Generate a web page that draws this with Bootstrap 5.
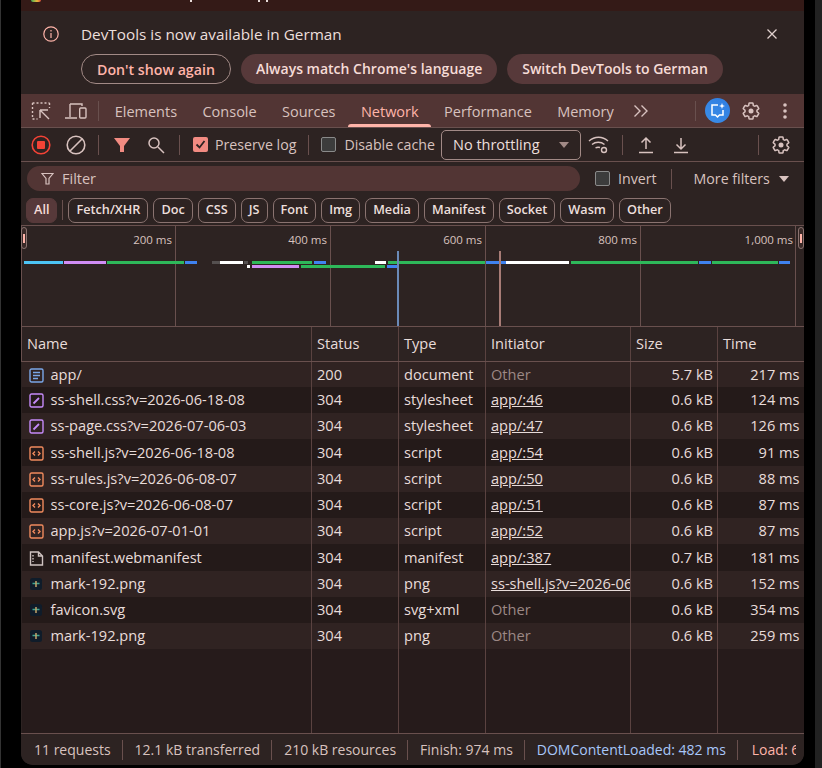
<!DOCTYPE html>
<html lang="en">
<head>
<meta charset="UTF-8">
<title>DevTools Network</title>
<link href="https://cdn.jsdelivr.net/npm/bootstrap@5.3.0/dist/css/bootstrap.min.css" rel="stylesheet">
<style>
    html, body { height: 768px; overflow: hidden; }
    body { background: #000; font-family: "Open Sans", "Noto Sans", sans-serif; font-size: 14.5px; color: #e8dcda; line-height: 1.2; }
    .side-strip { width: 1px; background: #333; margin-right: 20px; }
    .right-strip { width: 7px; height: 768px; background: #222; margin-left: 11px; }
    .devtools { width: 783px; height: 765px; background: #2d2322; border-radius: 0 0 12px 12px; overflow: hidden; }
    .title-strip { height: 11px; background: #341a17; }
    .fav-bit { width: 10px; height: 2px; margin-left: 10px; border-radius: 0 0 5px 5px; background: linear-gradient(90deg, #3aa655, #e8b93a 60%, #d9483b); }
    .text-bit { width: 2px; height: 2px; background: #e8dcda; }
    .bit-a { margin-left: 149px; }
    .bit-b { margin-left: 66px; }
    .bit-c { margin-left: 6px; }
    .info-bar { height: 83px; padding: 14px 27px 0 22px; }
    .info-head { margin-bottom: 11px; }
    .info-title { color: #ecdfdc; font-size: 15.3px; margin-left: 22px; }
    .pill-row { margin-left: 38px; gap: 10px; }
    .pill { height: 30px; border-radius: 15px; padding: 0 15px; font-weight: 600; font-size: 14px; background: #57393a; color: #f6dcd7; border: 0; }
    .pill-line { background: transparent; border: 1px solid #a28a86; color: #ffb4a9; font-size: 14.2px; }
    .tab-bar { height: 34px; background: #523534; border-bottom: 1px solid #69504e; }
    .tab-item { padding: 2px 12.7px 0; height: 33px; font-size: 14.5px; font-weight: 500; color: #d8c2bf; position: relative; }
    .tab-on { color: #ffb4a9; }
    .tab-on::after { content: ""; position: absolute; left: 0; right: 0; bottom: 0; height: 3px; background: #ffb4a9; border-radius: 3px 3px 0 0; }
    .tool-bar { height: 34px; border-bottom: 1px solid #69504e; }
    .vsep { width: 1px; height: 20px; background: #69504e; flex: none; }
    .ic { flex: none; display: block; }
    .check { width: 15px; height: 15px; border-radius: 2px; background: #f28b82; flex: none; }
    .uncheck { width: 15px; height: 15px; border-radius: 2px; background: #3c3c3c; border: 1px solid #8a8a8a; flex: none; }
    .soft { color: #d8c2bf; font-size: 14.2px; }
    .throttle { width: 140px; height: 30px; border: 1px solid #a28a86; border-radius: 5px; padding: 0 11px; color: #ecdfdc; flex: none; }
    .tri { width: 0; height: 0; border-left: 5px solid transparent; border-right: 5px solid transparent; border-top: 6px solid #a28a86; }
    .tri-light { border-top-color: #d8c2bf; }
    .filter-row { height: 33px; }
    .filter-box { width: 553px; height: 25px; border-radius: 13px; background: #523534; padding: 0 14px; color: #d8c2bf; }
    .chip-row { height: 30px; padding-left: 5px; gap: 5px; }
    .chip { height: 25px; border: 1px solid #8a7370; border-radius: 7px; padding: 0 7px; font-size: 12.7px; font-weight: 600; color: #ecdfdc; }
    .chip-on { background: #57393a; border-color: #57393a; color: #f6dcd7; }
    .overview { height: 102px; border-top: 1px solid #69504e; border-bottom: 1px solid #69504e; border-left: 1px solid #69504e; position: relative; }
    .grid-line { position: absolute; top: 0; bottom: 0; width: 1px; background: #69504e; }
    .tick { position: absolute; top: 7px; font-size: 11.5px; color: #d8c2bf; transform: translateX(-100%); white-space: nowrap; }
    .seg { position: absolute; height: 3px; }
    .marker { position: absolute; top: 25px; bottom: 0; width: 2px; }
    .handle { position: absolute; top: 1px; width: 6px; height: 22px; border: 1px solid #8a7370; background: #3a2a28; border-radius: 3px; }
    .handle::after { content: ""; position: absolute; left: 1px; top: 6px; height: 9px; width: 2px; background: #ffb4a9; }
    .net-table { table-layout: fixed; width: 782px; border-collapse: collapse; margin: 0; font-size: 14.6px; }
    .net-table th, .net-table td { border-right: 1px solid #5a4240; padding: 0 5px; white-space: nowrap; overflow: hidden; font-weight: 400; color: #e8dcda; }
    .net-table th { height: 34px; background: #2d2322; border-bottom: 1px solid #69504e; }
    .net-table th:first-child { border-left: 1px solid #69504e; padding-left: 5px; }
    .net-table td { height: 26px; }
    .net-table td:first-child { padding-left: 7px; }
    .net-table tbody tr:nth-child(4n) td { height: 27px; }
    .row-a td { background: #302322; }
    .row-b td { background: #241a19; }
    .net-table tbody tr.row-fill td { background: #261b1b; height: 84px; }
    .net-table td.dim { color: #9c8885; }
    .net-table td.lnk { text-decoration: underline; }
    .net-table td.text-end { padding-right: 4px; }
    .net-table th:last-child, .net-table td:last-child { border-right: 0; }
    .file-ic { margin-right: 7px; vertical-align: -3px; display: inline-block; }
    .status-bar { height: 32px; background: #2d2322; border-top: 1px solid #69504e; padding: 0 8px 0 13px; font-size: 14px; color: #d8c2bf; white-space: nowrap; }
    .status-clip { overflow: hidden; width: 100%; }
    .status-clip span { padding-right: 11px; margin-right: 12px; border-right: 1px solid #69504e; height: 20px; line-height: 20px; flex: none; }
    .status-clip .st-dom { color: #a8c7fa; margin-right: 14px; }
    .status-clip .st-load { color: #ffb4a9; border: 0; }
    .sp-3 { margin-left: 3px; } .sp-6 { margin-left: 6px; } .sp-7 { margin-left: 7px; } .sp-8 { margin-left: 8px; }
    .sp-9 { margin-left: 9px; } .sp-10 { margin-left: 10px; } .sp-11 { margin-left: 11px; } .sp-12 { margin-left: 12px; }
    .sp-13 { margin-left: 13px; } .sp-14 { margin-left: 14px; } .sp-15 { margin-left: 15px; } .sp-16 { margin-left: 16px; }
    .sp-17 { margin-left: 17px; } .sp-22 { margin-left: 22px; }
    .end-17 { margin-right: 17px; } .end-13 { margin-right: 13px; }
</style>
</head>
<body>
<svg width="0" height="0" class="position-absolute"><defs>
    <symbol id="gear" viewBox="0 0 24 24"><path fill="none" stroke="#d8c2bf" stroke-width="1.800" d="M19.140 12.940c.04-.3.06-.61.06-.94 0-.32-.02-.64-.07-.94l2.030-1.580c.18-.14.23-.41.12-.61l-1.920-3.320c-.12-.22-.37-.29-.59-.22l-2.390.96c-.5-.38-1.030-.7-1.620-.94l-.36-2.540c-.04-.24-.24-.41-.48-.41h-3.840c-.24 0-.43.17-.47.41l-.36 2.540c-.59.24-1.130.57-1.620.94l-2.390-.96c-.22-.08-.47 0-.59.22L2.740 8.870c-.12.21-.08.47.12.61l2.030 1.580c-.05.3-.09.63-.09.94s.02.64.07.94l-2.030 1.580c-.18.14-.23.41-.12.61l1.920 3.320c.12.22.37.29.59.22l2.390-.96c.5.38 1.030.7 1.620.94l.36 2.540c.05.24.24.41.48.41h3.840c.24 0 .44-.17.47-.41l.36-2.540c.59-.24 1.130-.56 1.620-.94l2.390.96c.22.08.47 0 .59-.22l1.920-3.320c.12-.22.07-.47-.12-.61l-2.010-1.580z"/><circle cx="12" cy="12" r="3" fill="#d8c2bf"/></symbol>
</defs></svg>
<div class="d-flex">
    <div class="side-strip"></div>
    <div class="devtools d-flex flex-column">
        <div class="title-strip d-flex align-items-start">
            <div class="fav-bit"></div>
            <div class="text-bit bit-a"></div>
            <div class="text-bit bit-b"></div>
            <div class="text-bit bit-c"></div>
        </div>

        <div class="info-bar">
            <div class="d-flex align-items-center info-head">
                <svg class="ic" width="16" height="16" viewBox="0 0 16 16" fill="none" stroke="#ffb4a9" stroke-width="1.200"><circle cx="8" cy="8" r="7.200"/><path d="M8 7v5M8 4v1.500"/></svg>
                <span class="info-title flex-grow-1">DevTools is now available in German</span>
                <svg class="ic" width="10" height="10" viewBox="0 0 10 10" stroke="#e0d0ce" stroke-width="1.300"><path d="M.5.5l9 9M9.500.5l-9 9"/></svg>
            </div>
            <div class="d-flex pill-row">
                <button class="pill pill-line">Don't show again</button>
                <button class="pill">Always match Chrome's language</button>
                <button class="pill">Switch DevTools to German</button>
            </div>
        </div>

        <div class="tab-bar d-flex align-items-center">
            <svg class="ic sp-10" width="20" height="20" viewBox="0 0 20 20" fill="none" stroke="#d8c2bf" stroke-width="1.400"><path d="M1.500 2h17M1.500 2v15M1.500 18h5M18.500 2v5" stroke-dasharray="2 2"/><path d="M9 9h8M9 9v8M9.500 9.500L18 18"/></svg>
            <svg class="ic sp-14" width="22" height="20" viewBox="0 0 22 20" fill="none" stroke="#d8c2bf" stroke-width="1.400"><path d="M5 3h12v2M5 3v13M0 17h12"/><rect x="14.700" y="7" width="6.300" height="10" rx="1"/></svg>
            <div class="vsep sp-11"></div>
            <div class="d-flex align-items-center sp-3">
                <div class="tab-item d-flex align-items-center">Elements</div>
                <div class="tab-item d-flex align-items-center">Console</div>
                <div class="tab-item d-flex align-items-center">Sources</div>
                <div class="tab-item tab-on d-flex align-items-center">Network</div>
                <div class="tab-item d-flex align-items-center">Performance</div>
                <div class="tab-item d-flex align-items-center">Memory</div>
            </div>
            <svg class="ic sp-7" width="16" height="14" viewBox="0 0 16 14" fill="none" stroke="#d8c2bf" stroke-width="1.400"><path d="M1.500 1.500L7 7l-5.500 5.500M8.500 1.500L14 7l-5.500 5.500"/></svg>
            <div class="vsep ms-auto"></div>
            <svg class="ic sp-9" width="25" height="25" viewBox="0 0 25 25"><defs><linearGradient id="aiGrad" x1="0" y1="1" x2="1" y2="0"><stop offset="0" stop-color="#3b8ee8"/><stop offset="1" stop-color="#2f7de0"/></linearGradient></defs><circle cx="12.500" cy="12.500" r="12.500" fill="url(#aiGrad)"/><path d="M13 7H7v10h3.500l2 2 2-2H18v-5" fill="none" stroke="#fff" stroke-width="1.500"/><path d="M17 5l.8 2.200L20 8l-2.200.8L17 11l-.8-2.200L14 8l2.200-.8z" fill="#fff"/></svg>
            <svg class="ic sp-11" width="20" height="20"><use href="#gear"/></svg>
            <svg class="ic sp-22 end-17" width="4" height="16" viewBox="0 0 4 16" fill="#d8c2bf"><circle cx="2" cy="2" r="1.800"/><circle cx="2" cy="8" r="1.800"/><circle cx="2" cy="14" r="1.800"/></svg>
        </div>

        <div class="tool-bar d-flex align-items-center">
            <svg class="ic sp-10" width="20" height="20" viewBox="0 0 20 20" fill="none"><circle cx="10" cy="10" r="8.800" stroke="#f44336" stroke-width="1.600"/><rect x="6" y="6" width="8" height="8" rx="1" fill="#f44336"/></svg>
            <svg class="ic sp-15" width="20" height="20" viewBox="0 0 20 20" fill="none" stroke="#d8c2bf" stroke-width="1.600"><circle cx="10" cy="10" r="8.800"/><path d="M4 16L16 4"/></svg>
            <div class="vsep sp-12"></div>
            <svg class="ic sp-14" width="18" height="18" viewBox="0 0 18 18" fill="#f28b82"><path d="M1 2h16l-6 8v6H7v-6z"/></svg>
            <svg class="ic sp-16" width="18" height="18" viewBox="0 0 18 18" fill="none" stroke="#d8c2bf" stroke-width="1.500"><circle cx="7" cy="7" r="5"/><path d="M11 11l6 6"/></svg>
            <div class="vsep sp-14"></div>
            <div class="check sp-13 d-flex align-items-center justify-content-center">
                <svg width="11" height="11" viewBox="0 0 11 11" fill="none" stroke="#2d2322" stroke-width="1.800"><path d="M1.500 5.500L4.500 8.500 9.500 2"/></svg>
            </div>
            <span class="soft sp-7">Preserve log</span>
            <div class="vsep sp-12"></div>
            <div class="uncheck sp-12"></div>
            <span class="soft sp-8">Disable cache</span>
            <div class="throttle d-flex align-items-center justify-content-between sp-6">
                <span>No throttling</span><span class="tri"></span>
            </div>
            <svg class="ic sp-7" width="22" height="20" viewBox="0 0 22 20" fill="none" stroke="#d8c2bf" stroke-width="1.400"><path d="M1 6c5.500-5 13.500-5 19 0M4 9.500c3.500-3 9-3 12.500 0M7.500 13c1.500-1 3-1 4.500-.5"/><circle cx="16" cy="15" r="2.500"/></svg>
            <div class="vsep sp-12"></div>
            <svg class="ic sp-14" width="18" height="18" viewBox="0 0 18 18" fill="none" stroke="#d8c2bf" stroke-width="1.500"><path d="M9 13V2M4.500 6.500L9 2l4.500 4.500M2 16.500h14"/></svg>
            <svg class="ic sp-17" width="18" height="18" viewBox="0 0 18 18" fill="none" stroke="#d8c2bf" stroke-width="1.500"><path d="M9 2v11M4.500 8.500L9 13l4.500-4.500M2 16.500h14"/></svg>
            <div class="vsep ms-auto"></div>
            <svg class="ic sp-12 end-13" width="20" height="20"><use href="#gear"/></svg>
        </div>

        <div class="filter-row d-flex align-items-center">
            <div class="filter-box d-flex align-items-center gap-2 sp-6">
                <svg class="ic" width="13" height="13" viewBox="0 0 13 13" fill="none" stroke="#d8c2bf" stroke-width="1.200"><path d="M1 1.500h11L8 6.500V12H5V6.500z"/></svg>
                <span>Filter</span>
            </div>
            <div class="uncheck sp-15"></div>
            <span class="soft sp-8">Invert</span>
            <div class="vsep sp-14"></div>
            <span class="soft sp-22">More filters</span>
            <span class="tri tri-light sp-9"></span>
        </div>

        <div class="chip-row d-flex align-items-center">
            <div class="chip chip-on d-flex align-items-center">All</div>
            <div class="vsep"></div>
            <div class="chip d-flex align-items-center">Fetch/XHR</div>
            <div class="chip d-flex align-items-center">Doc</div>
            <div class="chip d-flex align-items-center">CSS</div>
            <div class="chip d-flex align-items-center">JS</div>
            <div class="chip d-flex align-items-center">Font</div>
            <div class="chip d-flex align-items-center">Img</div>
            <div class="chip d-flex align-items-center">Media</div>
            <div class="chip d-flex align-items-center">Manifest</div>
            <div class="chip d-flex align-items-center">Socket</div>
            <div class="chip d-flex align-items-center">Wasm</div>
            <div class="chip d-flex align-items-center">Other</div>
        </div>

        <div class="overview" id="overview"></div>

        <table class="net-table">
            <colgroup><col style="width:290px"><col style="width:87px"><col style="width:87px"><col style="width:145px"><col style="width:87px"><col style="width:86px"></colgroup>
            <thead><tr><th>Name</th><th>Status</th><th>Type</th><th>Initiator</th><th>Size</th><th>Time</th></tr></thead>
            <tbody id="rows"></tbody>
        </table>

        <div class="status-bar d-flex align-items-center mt-auto">
            <div class="status-clip d-flex align-items-center">
                <span>11 requests</span>
                <span>12.1 kB transferred</span>
                <span>210 kB resources</span>
                <span>Finish: 974 ms</span>
                <span class="st-dom">DOMContentLoaded: 482 ms</span>
                <span class="st-load">Load: 6</span>
            </div>
        </div>
    </div>
    <div class="right-strip"></div>
</div>

<script src="https://cdn.jsdelivr.net/npm/bootstrap@5.3.0/dist/js/bootstrap.bundle.min.js"></script>
<script>
    const icons = {
        doc: '<svg class="file-ic" width="15" height="15" viewBox="0 0 15 15" fill="none" stroke="#7aa7e8" stroke-width="1.400"><rect x="1" y="1" width="13" height="13" rx="1.500"/><path d="M4 4.500h7M4 7.500h7M4 10.500h5"/></svg>',
        css: '<svg class="file-ic" width="15" height="15" viewBox="0 0 15 15" fill="none" stroke="#c58af9" stroke-width="1.400"><rect x="1" y="1" width="13" height="13" rx="1.500"/><path d="M4.500 10.500l5.500-5.500" stroke-width="1.800"/></svg>',
        js: '<svg class="file-ic" width="15" height="15" viewBox="0 0 15 15" fill="none" stroke="#f08a5d" stroke-width="1.400"><rect x="1" y="1" width="13" height="13" rx="1.500"/><path d="M6 5.500l-2 2 2 2M9 5.500l2 2-2 2"/></svg>',
        file: '<svg class="file-ic" width="15" height="15" viewBox="0 0 15 15" fill="none" stroke="#cfc3c1" stroke-width="1.400"><path d="M1.500 1h8l4 4v9h-12zM9.500 1v4h4"/><path d="M4 4v7" stroke-dasharray="1.500 1.500"/></svg>',
        img: '<svg class="file-ic" width="15" height="15" viewBox="0 0 15 15"><rect x="1" y="1" width="12" height="12" rx="2.500" fill="#0f1c2a"/><path d="M3.500 6.500h7" stroke="#3fa58f" stroke-width="1.500"/><path d="M7 4v6" stroke="#c4a56a" stroke-width="1.500"/></svg>'
    };

    const rows = [
        ['doc', 'app/', '200', 'document', 'Other', '5.7 kB', '217 ms'],
        ['css', 'ss-shell.css?v=2026-06-18-08', '304', 'stylesheet', 'app/:46', '0.6 kB', '124 ms'],
        ['css', 'ss-page.css?v=2026-07-06-03', '304', 'stylesheet', 'app/:47', '0.6 kB', '126 ms'],
        ['js', 'ss-shell.js?v=2026-06-18-08', '304', 'script', 'app/:54', '0.6 kB', '91 ms'],
        ['js', 'ss-rules.js?v=2026-06-08-07', '304', 'script', 'app/:50', '0.6 kB', '88 ms'],
        ['js', 'ss-core.js?v=2026-06-08-07', '304', 'script', 'app/:51', '0.6 kB', '87 ms'],
        ['js', 'app.js?v=2026-07-01-01', '304', 'script', 'app/:52', '0.6 kB', '87 ms'],
        ['file', 'manifest.webmanifest', '304', 'manifest', 'app/:387', '0.7 kB', '181 ms'],
        ['img', 'mark-192.png', '304', 'png', 'ss-shell.js?v=2026-06', '0.6 kB', '152 ms'],
        ['img', 'favicon.svg', '304', 'svg+xml', 'Other', '0.6 kB', '354 ms'],
        ['img', 'mark-192.png', '304', 'png', 'Other', '0.6 kB', '259 ms']
    ];

    const tbody = document.getElementById('rows');
    rows.forEach((r, i) => {
        const tr = document.createElement('tr');
        tr.className = i % 2 === 0 ? 'row-a' : 'row-b';
        const initCls = r[4] === 'Other' ? 'dim' : 'lnk';
        tr.innerHTML = `<td>${icons[r[0]]}${r[1]}</td><td>${r[2]}</td><td>${r[3]}</td><td class="${initCls}">${r[4]}</td><td class="text-end">${r[5]}</td><td class="text-end">${r[6]}</td>`;
        tbody.appendChild(tr);
    });
    const fill = document.createElement('tr');
    fill.className = 'row-fill';
    fill.innerHTML = '<td></td><td></td><td></td><td></td><td></td><td></td>';
    tbody.appendChild(fill);

    const overview = document.getElementById('overview');
    const add = (cls, left, top, width, color) => {
        const el = document.createElement('div');
        el.className = cls;
        el.style.left = left + 'px';
        if (top !== null) el.style.top = top + 'px';
        if (width !== null) el.style.width = width + 'px';
        if (color) el.style.background = color;
        overview.appendChild(el);
    };
    [153, 308, 463, 618, 773].forEach(x => add('grid-line', x, null, null, null));
    [['200 ms', 150], ['400 ms', 305], ['600 ms', 460], ['800 ms', 615], ['1,000 ms', 771]].forEach(t => {
        const el = document.createElement('div');
        el.className = 'tick';
        el.style.left = t[1] + 'px';
        el.textContent = t[0];
        overview.appendChild(el);
    });
    const C = '#4cc4f5', P = '#d08df5', G = '#2eb85a', B = '#3f82f0', W = '#ffffff', D = '#555050';
    [
        [2, 35, 39, C], [42, 35, 42, P], [85, 35, 77, G], [163, 35, 12, B], [190, 35, 2, D], [192, 35, 6, D],
        [198, 35, 23, W], [222, 35, 4, D], [230, 35, 60, G], [292, 35, 12, B], [353, 35, 11, W], [366, 35, 97, G], [464, 35, 31, B],
        [230, 39, 47, P], [279, 39, 84, G], [365, 39, 12, B], [225, 39, 3, W],
        [484, 35, 63, W], [549, 35, 127, G], [677, 35, 12, B], [690, 35, 66, G], [757, 35, 11, B]
    ].forEach(s => add('seg', s[0], s[1], s[2], s[3]));
    add('marker', 375, null, null, '#6a8ab8');
    add('marker', 477, null, null, '#a87c76');
    add('handle', -1, null, null, null);
    add('handle', 776, null, null, null);
</script>
</body>
</html>
